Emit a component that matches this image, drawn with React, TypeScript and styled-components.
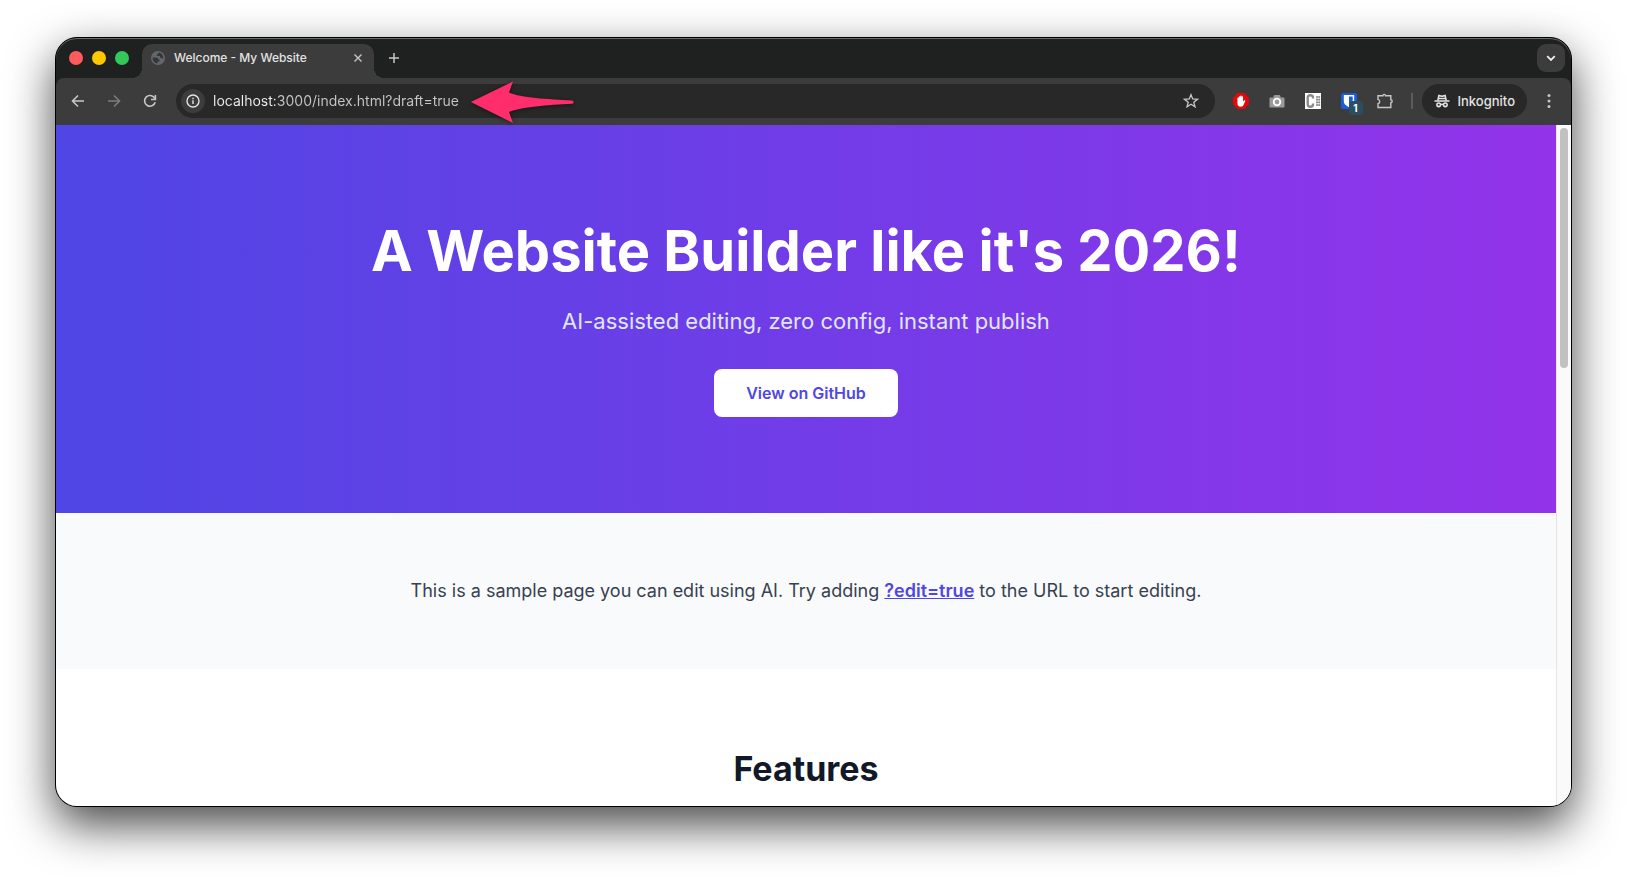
import React from "react";
import styled, { createGlobalStyle, css } from "styled-components";

const GlobalStyle = createGlobalStyle`
  *, *::before, *::after { box-sizing: border-box; }
  body {
    margin: 0;
    background: #fff;
    font-family: Inter, "Liberation Sans", sans-serif;
  }
  button { font: inherit; color: inherit; border: 0; background: none; padding: 0; cursor: pointer; }
  svg { display: block; flex: none; }
`;

const Desktop = styled.div`
  height: 100vh;
  min-height: 480px;
  padding: 37px 55px 73px;
  display: flex;
  overflow: hidden;
`;

const BrowserWindow = styled.div`
  flex: 1;
  min-width: 0;
  display: flex;
  flex-direction: column;
  border: 1px solid #000;
  border-radius: 22px;
  overflow: hidden;
  background: #1f2120;
  box-shadow: 0 18px 46px rgba(0, 0, 0, 0.72);
`;

const TabStrip = styled.header`
  display: flex;
  align-items: flex-end;
  height: 40px;
  flex: none;
  border-radius: 21px 21px 0 0;
  background: #1f2120;
  box-shadow: inset 0 1px 0 #6b6c6c;
  color: #e3e3e3;
`;

const TrafficLights = styled.div`
  display: flex;
  align-items: center;
  gap: 9px;
  height: 40px;
  padding: 0 13px;
`;

const Light = styled.button<{ $color: string }>`
  width: 14px;
  height: 14px;
  border-radius: 50%;
  background: ${(p) => p.$color};
`;

const Tab = styled.div`
  position: relative;
  display: flex;
  align-items: center;
  width: 232px;
  height: 34px;
  padding: 0 9px 6px;
  gap: 9px;
  border-radius: 10px 10px 0 0;
  background: #3c3c3c;

  &::before, &::after {
    content: "";
    position: absolute;
    bottom: 0;
    width: 10px;
    height: 10px;
  }
  &::before {
    right: 100%;
    background: radial-gradient(circle at 0 0, transparent 10px, #3c3c3c 10px);
  }
  &::after {
    left: 100%;
    background: radial-gradient(circle at 100% 0, transparent 10px, #3c3c3c 10px);
  }
`;

const TabTitle = styled.span`
  flex: 1;
  font-size: 12px;
  font-weight: 500;
  line-height: 16px;
  white-space: nowrap;
`;

const IconButton = styled.button<{ $size?: number; $dim?: boolean }>`
  display: flex;
  align-items: center;
  justify-content: center;
  flex: none;
  width: ${(p) => p.$size ?? 36}px;
  height: ${(p) => p.$size ?? 36}px;
  color: ${(p) => (p.$dim ? "#7c7c7c" : "#c7c7c7")};
`;

const NewTabButton = styled(IconButton)`
  margin: 0 auto 6px 6px;
`;

const TabSearchButton = styled(IconButton)`
  margin: 0 6px 6px 0;
  border-radius: 9px;
  background: #3c3c3c;
  color: #f0f0f0;
`;

const Toolbar = styled.div`
  display: flex;
  align-items: center;
  flex: none;
  height: 47px;
  padding: 0 4px 1px;
  border-radius: 8px 8px 0 0;
  background: #3c3c3c;
`;

const pill = css`
  display: flex;
  align-items: center;
  height: 34px;
  border-radius: 17px;
  background: #282828;
`;

const AddressBar = styled.form`
  ${pill}
  position: relative;
  flex: 1;
  min-width: 0;
  margin: 0 8px;
  padding: 0 6px 0 5px;
`;

const SiteInfoButton = styled(IconButton)`
  border-radius: 50%;
  background: #3c3c3c;
  color: #e3e3e3;
`;

const AddressInput = styled.input`
  flex: 1;
  min-width: 0;
  margin-left: 8px;
  padding: 0;
  border: 0;
  outline: 0;
  font-family: inherit;
  font-size: 14px;
  line-height: 20px;
  color: transparent;
  background: linear-gradient(90deg, #f0f0f0 62px, #c7c7c7 62px);
  background-clip: text;
  -webkit-background-clip: text;
`;

const ArrowCallout = styled.svg`
  position: absolute;
  left: 294px;
  top: -3px;
  pointer-events: none;
  overflow: visible;
  filter: drop-shadow(0 1px 2px rgba(0, 0, 0, 0.5));
`;

const Divider = styled.span`
  width: 2px;
  height: 16px;
  margin: 0 9px 0 8px;
  background: #5c5c5c;
`;

const BadgeHolder = styled.span`
  position: relative;
`;

const Badge = styled.span`
  position: absolute;
  left: 8px;
  top: 8px;
  width: 14px;
  height: 14px;
  border-radius: 4px;
  background: #2b4f60;
  color: #fff;
  font-size: 10px;
  font-weight: 700;
  line-height: 14px;
  text-align: center;
`;

const IncognitoChip = styled.button`
  ${pill}
  gap: 8px;
  margin-right: 4px;
  padding: 0 12px;
  color: #e3e3e3;
  font-size: 13px;
  font-weight: 500;
  line-height: 16px;
`;

const Viewport = styled.div`
  flex: 1;
  min-height: 0;
  display: flex;
  background: #fff;
`;

const Page = styled.main`
  flex: 1;
  min-width: 0;
  overflow: hidden;
  text-align: center;
`;

const Scrollbar = styled.div`
  flex: none;
  width: 15px;
  padding: 3px;
  border-left: 1px solid #e6e6e6;
  background: #fafafa;
`;

const ScrollThumb = styled.div`
  width: 8px;
  height: 240px;
  border-radius: 4px;
  background: #c1c1c1;
`;

const Hero = styled.section`
  display: flex;
  flex-direction: column;
  align-items: center;
  padding: 96px 24px;
  background: linear-gradient(90deg, #4f46e5, #9333ea);
`;

const HeroTitle = styled.h1`
  margin: 0 0 24px;
  color: #fff;
  font-size: 56px;
  font-weight: 700;
  line-height: 60px;
`;

const HeroText = styled.p`
  margin: 0 0 32px;
  color: #e0e7ff;
  font-size: 22px;
  line-height: 32px;
`;

const HeroLink = styled.a`
  padding: 12px 32px;
  border-radius: 8px;
  background: #fff;
  color: #4f46e5;
  font-size: 16px;
  font-weight: 600;
  line-height: 24px;
  text-decoration: none;
`;

const Intro = styled.section`
  padding: 64px 24px;
  background: #f9fafb;
`;

const IntroText = styled.p`
  margin: 0;
  color: #374151;
  font-size: 18px;
  line-height: 28px;

  a { color: #4f46e5; font-weight: 600; text-decoration: underline; }
`;

const Features = styled.section`
  padding: 80px 24px;
`;

const SectionTitle = styled.h2`
  margin: 0;
  color: #111827;
  font-size: 34px;
  font-weight: 700;
  line-height: 40px;
`;

type LineIconProps = { size?: number; width?: number; children: React.ReactNode };
const LineIcon = ({ size = 16, width = 1.6, children }: LineIconProps) => (
  <svg width={size} height={size} viewBox="0 0 16 16" fill="none" stroke="currentColor" strokeWidth={width} aria-hidden="true">
    {children}
  </svg>
);

const GlobeIcon = () => (
  <svg width="14" height="14" viewBox="0 0 14 14" aria-hidden="true">
    <circle cx="7" cy="7" r="7" fill="#63676b" />
    <path d="M1.6 6.4h3.2c1.8 0 2.5.8 2.5 2H8.6l-.2 2.1H6.6v2a5.5 5.5 0 0 1-5-6.100zM7.3 1.500c.2 1.100-.3 1.700-1.500 1.900v1.500h2.900l.7 2.100h1.500l1.200.9c.8-3-1.200-6.100-4.800-6.400z" fill="#34373a" />
  </svg>
);

const HandStopIcon = () => (
  <svg width="16" height="16" viewBox="0 0 16 16" aria-hidden="true">
    <path d="M4.700 0h6.600L16 4.700v6.600L11.300 16H4.700L0 11.300V4.700z" fill="#e4070b" />
    <path d="M4.400 8V5.200a.7.7 0 0 1 1.400 0V4a.7.7 0 0 1 1.400 0v-.7a.75.75 0 0 1 1.500 0V4a.7.7 0 0 1 1.400 0v4.600l1-1c.5-.5 1.400-.1 1.200.5l-1.800 3.900c-.5 1.200-1.300 1.700-2.700 1.700-2.300 0-3.400-1.300-3.400-3.400z" fill="#fff" />
  </svg>
);

const CameraIcon = () => (
  <svg width="16" height="16" viewBox="0 0 16 16" aria-hidden="true">
    <path d="M1.500 4.500h3V3.600c0-.9.6-1.500 1.500-1.500h4c.9 0 1.500.6 1.500 1.500v.9h3c.6 0 1 .4 1 1v8c0 .6-.4 1-1 1h-13c-.6 0-1-.4-1-1v-8c0-.6.4-1 1-1z" fill="#9a9a9a" />
    <circle cx="8" cy="9" r="3.300" fill="#9a9a9a" stroke="#fff" strokeWidth="1.800" />
  </svg>
);

const ColonSquareIcon = () => (
  <svg width="16" height="16" viewBox="0 0 16 16" aria-hidden="true">
    <path d="M0 0h16v16H0z" fill="#fff" />
    <path d="M8 5.500V4.500C8 3 7.200 2.200 5.500 2.200S2.700 3 2.700 4.700v6.600c0 1.700.9 2.500 2.600 2.500S8 13 8 11.500v-1" fill="none" stroke="#8a8a8a" strokeWidth="2.400" />
    <g fill="#8a8a8a">
      <circle cx="12" cy="4" r="1.100" />
      <circle cx="14.200" cy="4" r="1.100" />
      <circle cx="12" cy="6.700" r="1.100" />
      <circle cx="14.200" cy="6.700" r="1.100" />
      <circle cx="12" cy="9.400" r="1.100" />
      <circle cx="14.200" cy="9.400" r="1.100" />
      <circle cx="12" cy="12.100" r="1.100" />
      <circle cx="14.200" cy="12.100" r="1.100" />
    </g>
  </svg>
);

const ShieldIcon = () => (
  <svg width="16" height="16" viewBox="0 0 16 16" aria-hidden="true">
    <rect width="16" height="16" rx="2" fill="#175ddc" />
    <path d="M2.800 2h10.400v6.200c0 2.800-2.400 4.600-5.200 6-2.800-1.400-5.200-3.200-5.200-6z" fill="#fff" />
    <path d="M8 3.500h3.700v4.700c0 1.800-1.600 3.200-3.700 4.300z" fill="#175ddc" />
  </svg>
);

const IncognitoIcon = () => (
  <svg width="16" height="16" viewBox="0 0 16 16" fill="none" stroke="currentColor" strokeWidth="1.600" aria-hidden="true">
    <path d="M.5 8h15" />
    <path d="M3.800 7.600 4.900 2.500l1.900.6a4 4 0 0 0 2.400 0l1.900-.6 1.100 5.100M4.300 5.500h7.400" />
    <circle cx="4.700" cy="11.800" r="1.800" />
    <circle cx="11.300" cy="11.800" r="1.800" />
    <path d="M6.400 11.600c1-.5 2.200-.5 3.200 0" />
  </svg>
);

const App = () => (
  <>
    <GlobalStyle />
    <Desktop>
      <BrowserWindow>
        <TabStrip>
          <TrafficLights>
            <Light type="button" aria-label="Close window" $color="#ff5b5c" />
            <Light type="button" aria-label="Minimize window" $color="#fdc800" />
            <Light type="button" aria-label="Zoom window" $color="#34c759" />
          </TrafficLights>
          <Tab>
            <GlobeIcon />
            <TabTitle>Welcome - My Website</TabTitle>
            <IconButton type="button" aria-label="Close tab" $size={14}>
              <LineIcon size={14}><path d="m4 4 8 8M12 4l-8 8" /></LineIcon>
            </IconButton>
          </Tab>
          <NewTabButton type="button" aria-label="New tab" $size={28}>
            <LineIcon width={1.500}><path d="M8 3v10M3 8h10" /></LineIcon>
          </NewTabButton>
          <TabSearchButton type="button" aria-label="Search tabs" $size={28}>
            <LineIcon width={1.800}><path d="m4.200 6.200 3.800 3.700 3.800-3.700" /></LineIcon>
          </TabSearchButton>
        </TabStrip>

        <Toolbar>
          <IconButton type="button" aria-label="Back">
            <LineIcon><path d="M14 8H3M8 2.500 2.500 8 8 13.500" /></LineIcon>
          </IconButton>
          <IconButton type="button" aria-label="Forward" $dim>
            <LineIcon><path d="M2 8h11M8 2.500 13.500 8 8 13.500" /></LineIcon>
          </IconButton>
          <IconButton type="button" aria-label="Reload">
            <LineIcon><path d="M13.200 9.300A5.400 5.400 0 1 1 12.600 5M13.400 2v4.500H9" /></LineIcon>
          </IconButton>
          <AddressBar onSubmit={(e) => e.preventDefault()}>
            <SiteInfoButton type="button" aria-label="View site information" $size={24}>
              <LineIcon width={1.400}>
                <circle cx="8" cy="8" r="6" />
                <path d="M8 7.300v3.800M8 4.700v1.500" />
              </LineIcon>
            </SiteInfoButton>
            <AddressInput aria-label="Address" defaultValue="localhost:3000/index.html?draft=true" />
            <IconButton type="button" aria-label="Bookmark this tab">
              <LineIcon width={1.300}>
                <path d="m8 1.700 1.700 4.300 4.800.3-3.700 3 1.200 4.600L8 11.300l-4 2.600 1.200-4.600-3.700-3L6.300 6z" />
              </LineIcon>
            </IconButton>
            <ArrowCallout width="104" height="42" viewBox="0 0 104 42" aria-hidden="true">
              <path d="M.8 21 43 .5 39 11.500C51 17 78 18 102 19.600c2 .3 2 3 0 3.200C78 24 51 26 39 31l4 11z" fill="#ff2d6b" />
            </ArrowCallout>
          </AddressBar>
          <IconButton type="button" aria-label="Ad blocker"><HandStopIcon /></IconButton>
          <IconButton type="button" aria-label="Screen capture"><CameraIcon /></IconButton>
          <IconButton type="button" aria-label="Cookie manager"><ColonSquareIcon /></IconButton>
          <IconButton type="button" aria-label="Password manager">
            <BadgeHolder>
              <ShieldIcon />
              <Badge>1</Badge>
            </BadgeHolder>
          </IconButton>
          <IconButton type="button" aria-label="Extensions">
            <LineIcon width={1.400}>
              <path d="M1 2.700h4.900a1.300 1.300 0 0 1 2.600 0h5.300v4.200a1.300 1.300 0 0 1 0 2.800v4.800H1V10.700a2.200 2.200 0 0 0 0-4.300z" />
            </LineIcon>
          </IconButton>
          <Divider />
          <IncognitoChip type="button">
            <IncognitoIcon />
            Inkognito
          </IncognitoChip>
          <IconButton type="button" aria-label="Menu">
            <svg width="16" height="16" viewBox="0 0 16 16" fill="currentColor" aria-hidden="true">
              <circle cx="8" cy="2.500" r="1.500" />
              <circle cx="8" cy="8" r="1.500" />
              <circle cx="8" cy="13.500" r="1.500" />
            </svg>
          </IconButton>
        </Toolbar>

        <Viewport>
          <Page>
            <Hero>
              <HeroTitle>A Website Builder like it's 2026!</HeroTitle>
              <HeroText>AI-assisted editing, zero config, instant publish</HeroText>
              <HeroLink href="#github">View on GitHub</HeroLink>
            </Hero>
            <Intro>
              <IntroText>
                This is a sample page you can edit using AI. Try adding <a href="?edit=true">?edit=true</a> to the URL to start editing.
              </IntroText>
            </Intro>
            <Features>
              <SectionTitle>Features</SectionTitle>
            </Features>
          </Page>
          <Scrollbar>
            <ScrollThumb />
          </Scrollbar>
        </Viewport>
      </BrowserWindow>
    </Desktop>
  </>
);

export default App;
